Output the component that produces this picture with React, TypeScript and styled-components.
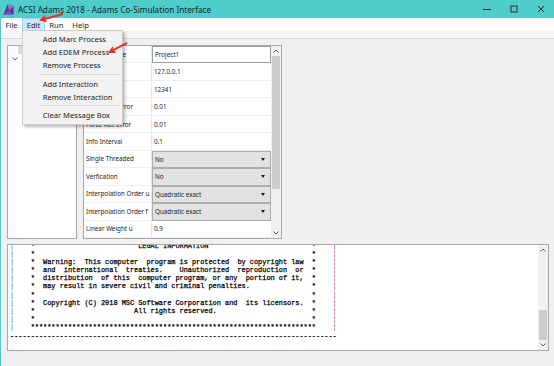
import styled, { createGlobalStyle } from "styled-components";

const GlobalStyle = createGlobalStyle`
  html, body {
    margin: 0;
    padding: 0;
    background: #f0f0f0;
  }
  body {
    font-family: "Noto Sans", "Open Sans", sans-serif;
    color: #1a1a1a;
  }
`;

type Row = { label: string; value: string; kind?: "input" | "combo" };

const rows: Row[] = [
  { label: "Project Name", value: "Project1", kind: "input" },
  { label: "Host", value: "127.0.0.1" },
  { label: "Port", value: "12341" },
  { label: "Force Abs. Error", value: "0.01" },
  { label: "Force Rel. Error", value: "0.01" },
  { label: "Info Interval", value: "0.1" },
  { label: "Single Threaded", value: "No", kind: "combo" },
  { label: "Verfication", value: "No", kind: "combo" },
  { label: "Interpolation Order u", value: "Quadratic exact", kind: "combo" },
  { label: "Interpolation Order f", value: "Quadratic exact", kind: "combo" },
  { label: "Linear Weight u", value: "0.9" },
];

const editGroups = [
  ["Add Marc Process", "Add EDEM Process", "Remove Process"],
  ["Add Interaction", "Remove Interaction"],
  ["Clear Message Box"],
];

// text between the two star columns of the licence banner
const banner = [
  "                         LEGAL INFORMATION",
  "",
  "  Warning:  This computer  program is protected  by copyright law",
  "  and  international  treaties.    Unauthorized  reproduction  or",
  "  distribution  of this  computer program, or any  portion of it,",
  "  may result in severe civil and criminal penalties.",
  "",
  "  Copyright (C) 2018 MSC Software Corporation and  its licensors.",
  "                        All rights reserved.",
  "",
];

const Chevron = ({ up }: { up?: boolean }) => (
  <svg width="6" height="4" viewBox="0 0 6 4">
    <polyline
      points={up ? "0.5,3.5 3,1 5.5,3.5" : "0.5,0.5 3,3 5.5,0.5"}
      fill="none"
      stroke="#606060"
      strokeWidth="1"
    />
  </svg>
);

const RedArrow = ({ x1, y1, x2, y2 }: { x1: number; y1: number; x2: number; y2: number }) => {
  const len = Math.hypot(x2 - x1, y2 - y1);
  const ux = (x2 - x1) / len;
  const uy = (y2 - y1) / len;
  const bx = x2 - ux * 7;
  const by = y2 - uy * 7;
  const hw = 3.8;
  return (
    <g>
      <line x1={x1} y1={y1} x2={bx} y2={by} stroke="#e8322b" strokeWidth="2" />
      <polygon
        points={`${x2},${y2} ${bx - uy * hw},${by + ux * hw} ${bx + uy * hw},${by - ux * hw}`}
        fill="#e8322b"
      />
    </g>
  );
};

export default function App() {
  return (
    <>
      <GlobalStyle />
      <Window>
        <TitleBar>
          <svg width="11" height="11" viewBox="0 0 11 11">
            <polygon points="0.5,10.5 4.5,0.5 10.5,2 10.5,10.5" fill="#5b3596" />
            <polygon points="4.5,0.5 10.5,2 6,6.5" fill="#9a72d6" />
            <polygon points="0.5,10.5 6,6.5 10.5,10.5" fill="#7a4fc0" />
          </svg>
          <Title>ACSI Adams 2018 - Adams Co-Simulation Interface</Title>
          <Controls>
            <CtrlButton>
              <svg width="8" height="8" viewBox="0 0 8 8">
                <line x1="0" y1="4.5" x2="8" y2="4.5" stroke="#2b2b2b" />
              </svg>
            </CtrlButton>
            <CtrlButton>
              <svg width="8" height="8" viewBox="0 0 8 8">
                <rect x="1" y="1" width="6" height="6" fill="none" stroke="#2b2b2b" />
              </svg>
            </CtrlButton>
            <CtrlButton>
              <svg width="8" height="8" viewBox="0 0 8 8">
                <path d="M1 1 L7 7 M7 1 L1 7" stroke="#2b2b2b" />
              </svg>
            </CtrlButton>
          </Controls>
        </TitleBar>

        <MenuBar>
          <MenuItem>File</MenuItem>
          <MenuItem $active>Edit</MenuItem>
          <MenuItem>Run</MenuItem>
          <MenuItem>Help</MenuItem>
        </MenuBar>
        <Strip />

        <Body>
          <TopRow>
            <TreePanel>
              <TreeGrip />
              <TreeToggle>
                <Chevron />
              </TreeToggle>
            </TreePanel>

            <GridPanel>
              <Table>
                {rows.map((r) => (
                  <>
                    <LabelCell key={r.label}>{r.label}</LabelCell>
                    <ValueCell key={r.label + "-v"} $kind={r.kind}>
                      {r.value}
                      {r.kind === "combo" && <ComboArrow />}
                    </ValueCell>
                  </>
                ))}
              </Table>
              <ScrollBar>
                <ScrollBtn>
                  <Chevron up />
                </ScrollBtn>
                <Thumb $h={133} />
                <Track />
                <ScrollBtn>
                  <Chevron />
                </ScrollBtn>
              </ScrollBar>
            </GridPanel>
          </TopRow>

          <MessageBox>
            <Console>
              {banner.map((t, i) => (
                <ConsoleLine key={i}>
                  <Pipe>|</Pipe>
                  {"    *" + t.padEnd(67) + "*    "}
                  <Pipe $right>|</Pipe>
                </ConsoleLine>
              ))}
              <ConsoleLine>
                <Pipe>|</Pipe>
                {"    " + "*".repeat(69) + "    "}
                <Pipe $right>|</Pipe>
              </ConsoleLine>
              <ConsoleLine>{"-".repeat(79)}</ConsoleLine>
            </Console>
            <ScrollBar>
              <ScrollBtn>
                <Chevron up />
              </ScrollBtn>
              <Track />
              <Thumb $h={30} />
              <ScrollBtn>
                <Chevron />
              </ScrollBtn>
            </ScrollBar>
          </MessageBox>
        </Body>

        <Dropdown>
          {editGroups.map((g, gi) => (
            <div key={gi}>
              {gi > 0 && <DropSep />}
              {g.map((item) => (
                <DropItem key={item}>{item}</DropItem>
              ))}
            </div>
          ))}
        </Dropdown>

        <Overlay width="554" height="366" viewBox="0 0 554 366">
          <RedArrow x1={63} y1={14} x2={39} y2={20.5} />
          <RedArrow x1={127} y1={43} x2={108} y2={53} />
        </Overlay>
      </Window>
    </>
  );
}

const Window = styled.div`
  position: relative;
  width: 554px;
  height: 366px;
  box-sizing: border-box;
  overflow: hidden;
  display: flex;
  flex-direction: column;
  background: #f0f0f0;
  border-left: 1px solid #4ecdcc;
`;

const TitleBar = styled.div`
  height: 18px;
  display: flex;
  align-items: center;
  padding-left: 2px;
  background: #4ecdcc;
`;

const Title = styled.div`
  margin-left: 4px;
  font-size: 8.2px;
  color: #1b1b1b;
  white-space: nowrap;
`;

const Controls = styled.div`
  margin-left: auto;
  display: flex;
  height: 100%;
`;

const CtrlButton = styled.div`
  width: 27px;
  display: flex;
  align-items: center;
  justify-content: center;
`;

const MenuBar = styled.div`
  height: 13px;
  display: flex;
  align-items: stretch;
  background: #ffffff;
`;

const MenuItem = styled.div<{ $active?: boolean }>`
  display: flex;
  align-items: center;
  padding: 0 3.5px;
  font-size: 7.6px;
  color: #1a1a1a;
  border: 1px solid ${(p) => (p.$active ? "#99d1ff" : "transparent")};
  background: ${(p) => (p.$active ? "#cce8ff" : "transparent")};
`;

const Strip = styled.div`
  height: 7px;
  background: #f6f6f6;
  border-bottom: 1px solid #d6d6d6;
`;

const Body = styled.div`
  flex: 1;
  display: flex;
  flex-direction: column;
  padding: 6px 5px 0 6px;
`;

const TopRow = styled.div`
  height: 194px;
  display: flex;
  gap: 6px;
`;

const TreePanel = styled.div`
  width: 70px;
  box-sizing: border-box;
  background: #ffffff;
  border: 1px solid #a9a9a9;
  display: flex;
  flex-direction: column;
`;

const TreeGrip = styled.div`
  width: 4px;
  height: 8px;
  margin-left: 10px;
  background: #dcdcdc;
`;

const TreeToggle = styled.div`
  margin: 3px 0 0 4px;
  display: flex;
`;

const GridPanel = styled.div`
  width: 199px;
  box-sizing: border-box;
  border: 1px solid #a9a9a9;
  display: flex;
  background: #ffffff;
`;

const Table = styled.div`
  flex: 1;
  display: grid;
  grid-template-columns: 68px 1fr;
  grid-template-rows: repeat(11, 1fr);
`;

const LabelCell = styled.div`
  display: flex;
  align-items: center;
  padding-left: 2px;
  font-size: 6.3px;
  white-space: nowrap;
  overflow: hidden;
  border-bottom: 1px solid #efefef;
  border-right: 1px solid #e6e6e6;
`;

const ValueCell = styled.div<{ $kind?: "input" | "combo" }>`
  display: flex;
  align-items: center;
  padding-left: 2px;
  font-size: 6.3px;
  white-space: nowrap;
  border-bottom: 1px solid #efefef;
  ${(p) =>
    p.$kind === "combo"
      ? `background: #e2e2e2; border: 1px solid #adadad;`
      : p.$kind === "input"
      ? `border: 1px solid #9c9c9c;`
      : ""}
`;

const ComboArrow = styled.span`
  margin-left: auto;
  margin-right: 5px;
  width: 0;
  height: 0;
  border-left: 2.5px solid transparent;
  border-right: 2.5px solid transparent;
  border-top: 3px solid #1a1a1a;
`;

const ScrollBar = styled.div`
  width: 10px;
  display: flex;
  flex-direction: column;
  background: #f0f0f0;
`;

const ScrollBtn = styled.div`
  height: 10px;
  display: flex;
  align-items: center;
  justify-content: center;
`;

const Thumb = styled.div<{ $h: number }>`
  height: ${(p) => p.$h}px;
  margin: 0 1px;
  background: #cdcdcd;
`;

const Track = styled.div`
  flex: 1;
`;

const MessageBox = styled.div`
  margin-top: 5px;
  height: 107px;
  box-sizing: border-box;
  display: flex;
  background: #ffffff;
  border: 1px solid #a9a9a9;
`;

const Console = styled.div`
  flex: 1;
  overflow: hidden;
  padding-left: 2px;
  font-family: "Liberation Mono", "DejaVu Sans Mono", monospace;
  font-size: 6.9px;
  line-height: 8.2px;
  color: #000000;
  -webkit-text-stroke: 0.25px #000000;
  > :first-child {
    margin-top: -3.5px;
  }
`;

const ConsoleLine = styled.div`
  white-space: pre;
  height: 8.2px;
`;

const Pipe = styled.span<{ $right?: boolean }>`
  color: ${(p) => (p.$right ? "#a0487f" : "#555555")};
  -webkit-text-stroke: 0;
`;

const Dropdown = styled.div`
  position: absolute;
  left: 20.7px;
  top: 30px;
  width: 101px;
  box-sizing: border-box;
  padding: 2px 0;
  background: #f2f2f2;
  border: 1px solid #cccccc;
  box-shadow: 2px 2px 3px rgba(0, 0, 0, 0.28);
`;

const DropItem = styled.div`
  height: 12.8px;
  display: flex;
  align-items: center;
  padding-left: 20px;
  font-size: 7.6px;
  color: #1a1a1a;
  white-space: nowrap;
`;

const DropSep = styled.div`
  height: 1px;
  margin: 2.5px 2px 2.5px 17px;
  background: #d7d7d7;
`;

const Overlay = styled.svg`
  position: absolute;
  left: -1px;
  top: 0;
  pointer-events: none;
`;
